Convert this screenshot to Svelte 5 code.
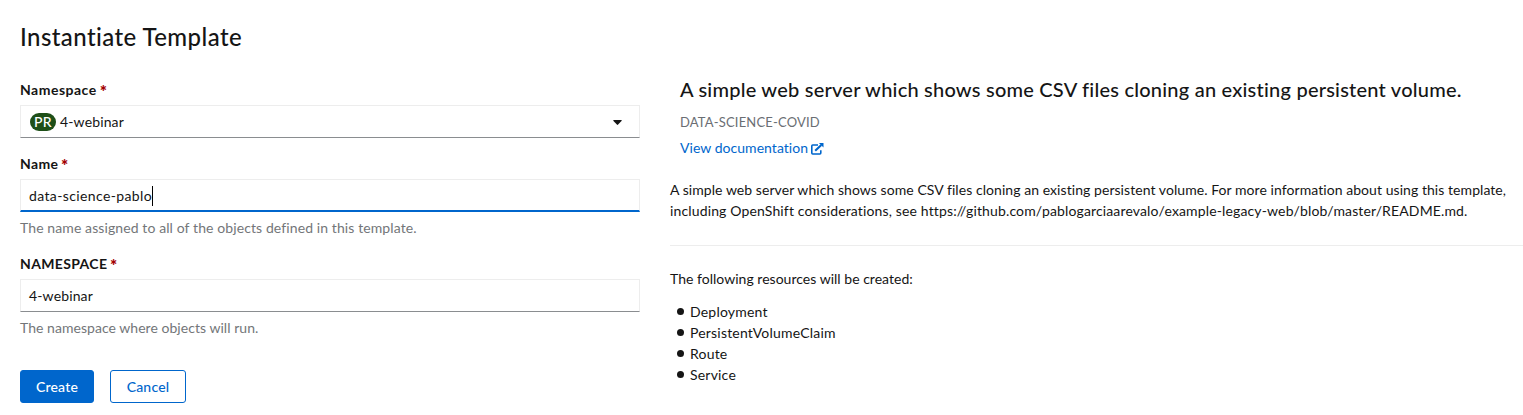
<script>
  let name = $state('data-science-pablo');
  const resources = ['Deployment', 'PersistentVolumeClaim', 'Route', 'Service'];
</script>

<main>
  <h1>Instantiate Template</h1>
  <div class="columns">
    <form onsubmit={(e) => e.preventDefault()}>
      <div class="group">
        <div class="label wide">Namespace <b>*</b></div>
        <div class="control">
          <span class="badge">PR</span>
          <span class="ns">4-webinar</span>
          <svg class="caret" width="9" height="5" viewBox="0 0 9 5"><path d="M.6 0h7.8q.6.3.1.9L5.1 4.6q-.6.6-1.2 0L.5.9Q0 .3.6 0z" fill="#151515" /></svg>
        </div>
      </div>
      <div class="group">
        <div class="label">Name <b>*</b></div>
        <div class="control focused"><span class="value">{name}</span><i class="cursor"></i></div>
        <p class="help">The name assigned to all of the objects defined in this template.</p>
      </div>
      <div class="group">
        <div class="label">NAMESPACE <b>*</b></div>
        <div class="control"><span class="ns">4-webinar</span></div>
        <p class="help short">The namespace where objects will run.</p>
      </div>
      <div class="actions">
        <button class="primary" type="submit">Create</button>
        <button class="secondary" type="button">Cancel</button>
      </div>
    </form>
    <section>
      <header>
        <h2>A simple web server which shows some CSV files cloning an existing persistent volume.</h2>
        <div class="slug">DATA-SCIENCE-COVID</div>
        <a href="#docs"><span>View documentation</span>
          <svg width="13" height="12" viewBox="0 0 13 12" fill="none" stroke="#06c">
            <path d="M7 2H1.7Q.8 2 .8 2.9v7.2q0 .9.9.9h7.2q.9 0 .9-.9V7.2" stroke-width="1.6" />
            <path d="M4.2 7.8 10.3 1.9" stroke-width="2.1" />
            <path d="M7.9 0h4.6v4.6z" fill="#06c" stroke="none" />
          </svg>
        </a>
      </header>
      <div class="description">
        <div class="lead">A simple web server which shows some CSV files cloning an existing persistent volume. For more information about using this template,</div>
        <div class="source">including OpenShift considerations, see https://github.com/pablogarciaarevalo/example-legacy-web/blob/master/README.md.</div>
      </div>
      <hr />
      <p class="intro">The following resources will be created:</p>
      <ul>
        {#each resources as resource}
          <li>{resource}</li>
        {/each}
      </ul>
    </section>
  </div>
</main>

<style>
  :global(body) { background: #fff; }
  main {
    box-sizing: border-box;
    height: 415px;
    overflow: hidden;
    padding: 19px 0 0 20px;
    font: 400 14px/21px Lato, sans-serif;
    font-variant-ligatures: none;
    color: #151515;
    white-space: nowrap;
  }
  h1, h2, p, ul { margin: 0; padding: 0; }
  h1 { font: 500 24px/36px Lato, sans-serif; font-variant-ligatures: none; letter-spacing: .42px; }
  .columns { display: grid; grid-template-columns: 620px 853px; column-gap: 30px; padding-top: 24px; }
  .group { margin-bottom: 15px; }
  .label { height: 21px; font-weight: 700; line-height: 21px; margin-bottom: 5px; letter-spacing: .35px; }
  .label.wide { letter-spacing: .5px; }
  .label b { display: inline-block; color: #a30000; font-size: 17px; line-height: 17px; vertical-align: -3px; margin-left: -1px; height: 17px; }
  .control {
    box-sizing: border-box;
    height: 33px;
    display: flex;
    align-items: center;
    padding: 0 8px 1px;
    border: 1px solid #ededed;
    border-bottom-color: #8a8d90;
  }
  .focused { padding-bottom: 0; padding-top: 1px; border-bottom: 2px solid #06c; }
  .value { letter-spacing: .38px; }
  .ns { letter-spacing: .14px; }
  .badge {
    width: 26px;
    height: 18px;
    margin: 1px 4px 0 1px;
    border-radius: 9px;
    background: #1e4f18;
    color: #fff;
    text-align: center;
    font-weight: 500;
    letter-spacing: .3px;
    line-height: 17px;
  }
  .caret { margin: 2px 9px 0 auto; }
  .cursor { width: 1px; height: 20px; background: #000; }
  .help { color: #737679; margin-top: 5px; letter-spacing: .1px; }
  .help.short { letter-spacing: .04px; }
  .actions { display: flex; gap: 16px; padding-top: 17px; }
  button {
    box-sizing: border-box;
    height: 33px;
    padding: 0;
    border: 1px solid #06c;
    border-radius: 3px;
    font: 500 14px/21px Lato, sans-serif;
    letter-spacing: .2px;
  }
  .primary { width: 74px; background: #06c; color: #fff; }
  .secondary { width: 76px; background: #fff; color: #06c; }
  header { padding-left: 10px; }
  h2 { font: 500 20px/20px Lato, sans-serif; font-variant-ligatures: none; letter-spacing: .22px; }
  .slug { color: #6a6e73; font-size: 13px; line-height: 20px; letter-spacing: .17px; margin-top: 13px; }
  a { display: flex; align-items: center; gap: 3px; color: #06c; text-decoration: none; margin-top: 5px; letter-spacing: .04px; }
  a svg { position: relative; top: 1px; }
  .description { margin-top: 21px; }
  .lead { letter-spacing: .06px; }
  .source { letter-spacing: .14px; }
  hr { height: 1px; border: 0; margin: 24px 0 22px; background: #ededed; }
  .intro { margin-bottom: 12px; letter-spacing: .02px; }
  ul { list-style: none; }
  li { display: flex; align-items: center; letter-spacing: .2px; }
  li::before { content: ''; width: 7px; height: 7px; border-radius: 50%; background: #151515; margin: 0 6px 0 7px; }
</style>
